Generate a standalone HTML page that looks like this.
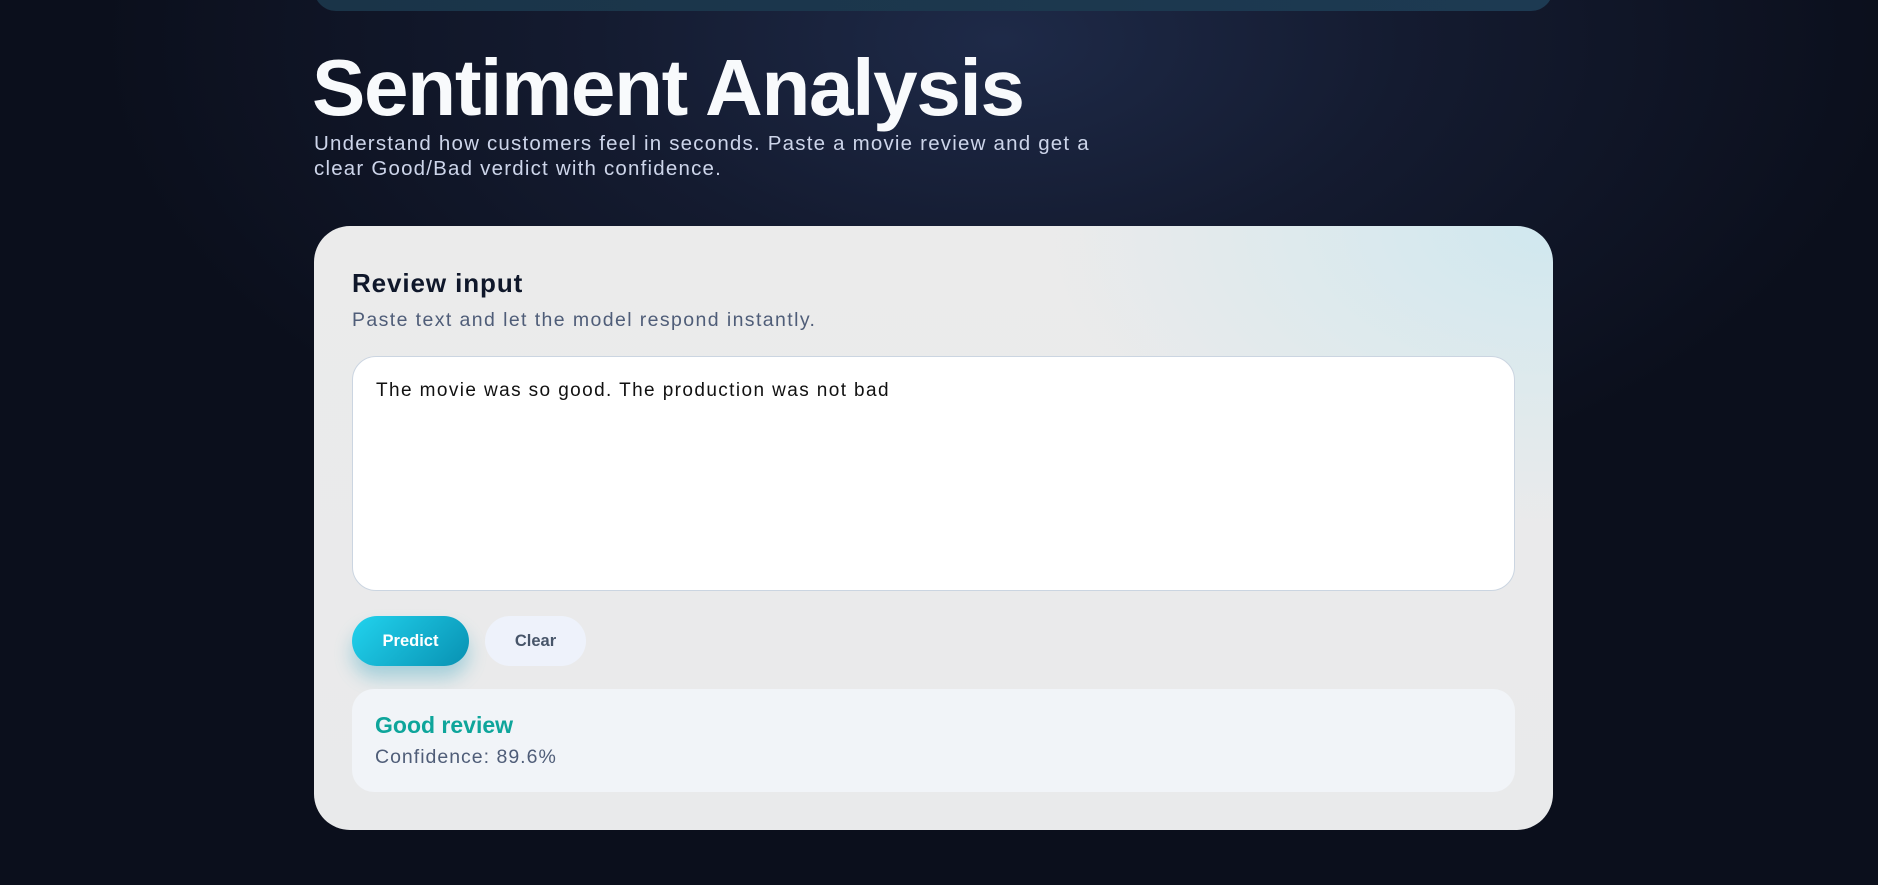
<!DOCTYPE html>
<html><head><meta charset="utf-8"><style>
*{box-sizing:border-box;margin:0;padding:0}
html,body{width:1878px;height:885px;overflow:hidden}
body{background:radial-gradient(ellipse 900px 500px at 1000px 40px,#1e2a48 0%,#141b30 45%,#0b0f1c 100%);font-family:"Liberation Sans",sans-serif;position:relative}
.bar{position:absolute;left:314px;top:-20px;width:1239px;height:31px;border-radius:0 0 22px 22px;background:linear-gradient(90deg,#1a3448,#1d3a52)}
h1{position:absolute;left:312px;top:42px;font-size:80px;font-weight:700;color:#f8fafc;letter-spacing:-1.3px}
.sub{position:absolute;left:314px;top:131px;width:800px;font-size:20.5px;line-height:25px;color:#cdd5ea;letter-spacing:1.2px}
.card{position:absolute;left:314px;top:226px;width:1239px;height:604px;border-radius:36px;background:radial-gradient(ellipse 500px 300px at 1239px 0,#d0e8ef,rgba(0,0,0,0)),linear-gradient(#ebebeb,#e9eaeb)}
.t{position:absolute;left:38px;top:42px;font-size:26px;font-weight:700;color:#0f172a;letter-spacing:0.9px}
.d{position:absolute;left:38px;top:83px;font-size:19.5px;color:#4f5d78;letter-spacing:1.4px}
.ta{position:absolute;left:38px;top:130px;width:1163px;height:235px;background:#fff;border:1px solid #cbd5e1;border-radius:24px;padding:23px 23px;font-size:19px;color:#111;letter-spacing:1.4px}
.b1{position:absolute;left:38px;top:390px;width:117px;height:50px;border-radius:25px;background:linear-gradient(135deg,#22d3ee,#0891b2);color:#fff;font-weight:700;font-size:16.5px;text-align:center;line-height:50px;box-shadow:0 12px 18px rgba(8,145,178,.3)}
.b2{position:absolute;left:171px;top:390px;width:101px;height:50px;border-radius:25px;background:#eef2fb;color:#475569;font-weight:700;font-size:16.5px;text-align:center;line-height:50px}
.res{position:absolute;left:38px;top:463px;width:1163px;height:103px;border-radius:22px;background:#f1f4f8}
.g{position:absolute;left:23px;top:23px;font-size:23px;font-weight:700;color:#0ea59b}
.c{position:absolute;left:23px;top:57px;font-size:19.5px;color:#4f5d78;letter-spacing:1px}
</style></head><body>
<div class="bar"></div>
<h1>Sentiment Analysis</h1>
<div class="sub">Understand how customers feel in seconds. Paste a movie review and get a clear Good/Bad verdict with confidence.</div>
<div class="card">
<div class="t">Review input</div>
<div class="d">Paste text and let the model respond instantly.</div>
<div class="ta">The movie was so good. The production was not bad</div>
<div class="b1">Predict</div>
<div class="b2">Clear</div>
<div class="res"><div class="g">Good review</div><div class="c">Confidence: 89.6%</div></div>
</div>
</body></html>
